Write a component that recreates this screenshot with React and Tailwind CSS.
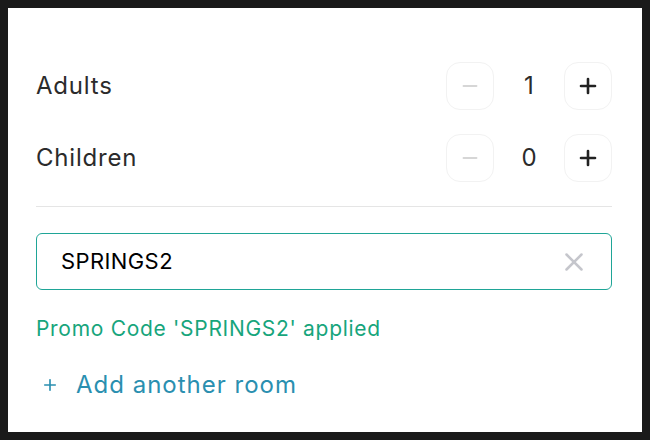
import React, { useState } from 'react'
import { Minus, Plus, X } from 'lucide-react'

const Counter = ({ label, value, onDec, onInc }) => (
  <div className="flex items-center justify-between h-12">
    <span className="text-[24px] tracking-[0.8px] text-[#2b2b2b]">{label}</span>
    <div className="flex items-center">
      <button
        onClick={onDec}
        className="w-12 h-12 flex items-center justify-center rounded-[14px] border border-[#f2f2f2] text-[#d6d6d6]"
      >
        <Minus size={22} strokeWidth={2.2} />
      </button>
      <span className="w-[70px] text-center text-[24px] text-[#2b2b2b]">{value}</span>
      <button
        onClick={onInc}
        className="w-12 h-12 flex items-center justify-center rounded-[14px] border border-[#f2f2f2] text-[#222]"
      >
        <Plus size={24} strokeWidth={2.6} />
      </button>
    </div>
  </div>
)

export default function App() {
  const [adults, setAdults] = useState(1)
  const [children, setChildren] = useState(0)
  const [code, setCode] = useState('SPRINGS2')

  return (
    <div className="w-[650px] h-[440px] bg-[#1a1a1a] p-2" style={{ fontFamily: 'Inter, "Liberation Sans", sans-serif' }}>
      <div className="h-full bg-white pl-[28px] pr-[30px] pt-[54px]">
        <div className="flex flex-col gap-6">
          <Counter
            label="Adults"
            value={adults}
            onDec={() => setAdults(Math.max(1, adults - 1))}
            onInc={() => setAdults(adults + 1)}
          />
          <Counter
            label="Children"
            value={children}
            onDec={() => setChildren(Math.max(0, children - 1))}
            onInc={() => setChildren(children + 1)}
          />
        </div>

        <div className="mt-6 border-t border-[#e5e5e5]" />

        <div className="mt-[26px] h-[57px] flex items-center justify-between border border-[#1fa597] rounded-md pl-6 pr-[22px]">
          <input
            value={code}
            onChange={(e) => setCode(e.target.value)}
            className="flex-1 outline-none text-[22px] tracking-[0.4px] text-black bg-transparent"
          />
          <button onClick={() => setCode('')} className="text-[#c5c6cc]">
            <X size={30} strokeWidth={2} />
          </button>
        </div>

        <p className="mt-[23px] text-[21px] tracking-[0.7px] text-[#17a57c]">Promo Code 'SPRINGS2' applied</p>

        <button className="mt-[22px] flex items-center gap-[17px] text-[24px] tracking-[1px] text-[#2a8fb0]">
          <Plus size={18} strokeWidth={2.2} className="ml-[5px]" />
          <span>Add another room</span>
        </button>
      </div>
    </div>
  )
}
